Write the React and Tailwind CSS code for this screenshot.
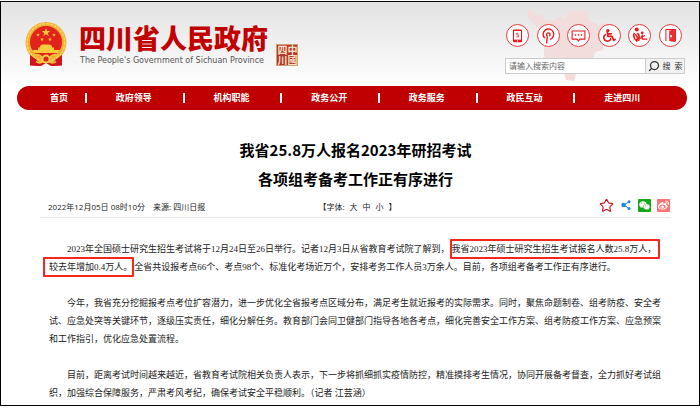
import React from 'react';
import { Search, Star } from 'lucide-react';
import { FaWeixin, FaWeibo, FaWheelchair } from 'react-icons/fa';

const navItems = ['政府领导', '机构职能', '政务公开', '政务服务', '政民互动', '走进四川'];

function Emblem() {
  const star = 'M0 -5 L1.2 -1.6 L4.8 -1.6 L1.9 0.6 L3 4 L0 1.9 L-3 4 L-1.9 0.6 L-4.8 -1.6 L-1.2 -1.6Z';
  return (
    <svg viewBox="0 0 42 44" className="h-11 w-[42px] shrink-0" aria-hidden="true">
      <path d="M5 30 L5 43 L16 44 L21 41 L26 44 L37 43 L37 30Z" fill="#d3141b" />
      <circle cx="21" cy="20.5" r="20.5" fill="#eeb032" />
      <circle cx="21" cy="20.5" r="18.8" fill="none" stroke="#fad45c" strokeWidth="1.6" strokeDasharray="3 1" />
      <circle cx="21" cy="20" r="16" fill="#e2231c" />
      <g fill="#fbc93d">
        <path d={star} transform="translate(21 10.5) scale(.9)" />
        <path d={star} transform="translate(13 13) scale(.4)" />
        <path d={star} transform="translate(29 13) scale(.4)" />
        <path d={star} transform="translate(17 17.5) scale(.4)" />
        <path d={star} transform="translate(25 17.5) scale(.4)" />
        <path d="M15 24 L17 22.500 H25 L27 24 V25.500 H29 V28 H35 L33 31 H9 L7 28 H13 V25.500 H15Z" />
      </g>
      <path d="M5 33 V43.500 L15 44 L12 38Z M37 33 V43.500 L27 44 L30 38Z" fill="#cf151b" />
      <path d="M7 33.500 Q14 31 17.500 36 M35 33.500 Q28 31 24.500 36 M11 39.500 Q15 42 18 39 M31 39.500 Q27 42 24 39" fill="none" stroke="#f4bd3b" strokeWidth="2" />
      <circle cx="21" cy="37" r="3.500" fill="#e2231c" stroke="#f8cf52" strokeWidth="1.8" />
    </svg>
  );
}

function ProvinceMap() {
  return (
    <svg viewBox="0 0 90 74" className="absolute right-[82px] top-[6px] h-[74px] w-[90px]" aria-hidden="true">
      <path
        d="M1 1 L5 2 L9 7 L14 6 L18 12 L28 12 L34 8 L38 12 L41 5 L45 2 L51 4 L56 2 L62 5 L63 13 L72 17 L80 15 L86 22 L84 28 L76 33 L76 42 L68 44 L66 52 L58 54 L53 50 L50 57 L49 66 L47 73 L39 72 L37 64 L33 66 L30 60 L21 54 L17 48 L17 37 L14 30 L11 20 L5 14 L1 9Z"
        fill="#f3dcdc"
      />
    </svg>
  );
}

function Phone() {
  return (
    <svg viewBox="0 0 23 23" className="size-full">
      <rect x="6.500" y="5" width="10" height="14" rx="1.200" fill="#e8181c" />
      <rect x="7.700" y="6.500" width="7.600" height="9.500" fill="#fff" />
      <path d="M12.700 9 H10.700 V11 H12.500 V13 H10.200" fill="none" stroke="#e8181c" strokeWidth=".8" />
      <circle cx="11.500" cy="17.400" r=".7" fill="#fff" />
    </svg>
  );
}

function Podcast() {
  return (
    <svg viewBox="0 0 23 23" className="size-full" fill="none" stroke="#e8181c" strokeWidth="1.500">
      <path d="M7.500 14.500 A5.800 5.800 0 1 1 13 15.800 M10.500 12.500 Q9.500 16 9.500 20" />
      <path d="M10.500 12.500 A2 2 0 1 1 12.500 12.200" />
    </svg>
  );
}

function Chat() {
  return (
    <svg viewBox="0 0 23 23" className="size-full">
      <path d="M4.500 6.500 H18.500 V15.500 H13 L11.500 17.500 L10 15.500 H4.500Z" fill="none" stroke="#e8181c" strokeWidth="1.200" />
      <path d="M7.500 11 H9 M10.800 11 H12.300 M14 11 H15.500" stroke="#e8181c" strokeWidth="1.500" />
    </svg>
  );
}

function Care() {
  return (
    <svg viewBox="0 0 23 23" className="size-full" fill="none" stroke="#e8181c" strokeWidth="1.700">
      <circle cx="8.500" cy="5" r="2.200" fill="#e8181c" stroke="none" />
      <circle cx="14.500" cy="8.500" r="1.500" fill="#e8181c" stroke="none" />
      <path d="M6 8.500 Q3.500 13 8.500 17.500 L9.500 14 L7 10 M9 9 Q12.500 11 10.500 17.500" />
      <path d="M14.500 10.500 V15.500 H20 M14.500 11.500 L12.500 15 M15 12.500 L17.500 11.500" strokeWidth="1.300" />
    </svg>
  );
}

function Door() {
  return (
    <svg viewBox="0 0 23 23" className="size-full">
      <path d="M6.500 17.500 V5 H17 V17.500" fill="none" stroke="#e8181c" strokeWidth="1.100" />
      <path d="M10 6 L17 5 V19 L10 17.500Z" fill="#ea3034" />
      <rect x="11.300" y="11" width="1.700" height="2.500" fill="#fff" />
    </svg>
  );
}

const tools = [
  ['手机版', <Phone />],
  ['微门户', <Podcast />],
  ['互动交流', <Chat />],
  ['无障碍', <FaWheelchair className="size-[13px]" />],
  ['关怀版', <Care />],
  ['登录', <Door />],
];

export default function App() {
  return (
    <div className="bg-white pt-px font-['Open_Sans','Noto_Sans_CJK_SC',sans-serif] text-black">
      <div className="overflow-hidden border border-black">
        <header className="relative flex h-[84px] justify-between bg-linear-to-b from-[#e2e2e2] to-white pl-6 pr-[14px]">
          <ProvinceMap />
          <div className="flex items-start pt-5">
            <Emblem />
            <div className="ml-3 text-[#c30000]">
              <div className="pt-[2px] text-[27px] font-black leading-[27px] font-['Noto_Sans_CJK_SC',sans-serif]">四川省人民政府</div>
              <div className="pl-px pt-1 text-[8px] leading-3 text-[#555] font-['DejaVu_Sans',sans-serif]">The People's Government of Sichuan Province</div>
            </div>
            <div className="ml-2 mt-[22px] size-[22px] border border-[#c9a070] bg-[#b5332a] text-[10px] font-bold leading-[10px] text-[#f3e3c4] [writing-mode:vertical-rl] font-['Noto_Sans_CJK_SC',sans-serif]">
              中國四川
            </div>
          </div>
          <div className="relative w-[180px] pt-[22px]">
            <div className="flex justify-between pl-px pr-[3px]">
              {tools.map(([label, icon]) => (
                <button
                  key={label}
                  aria-label={label}
                  className="flex size-[23px] items-center justify-center rounded-full border border-[#e8383c] bg-white text-[#e8181c]"
                >
                  {icon}
                </button>
              ))}
            </div>
            <form className="mt-[11px] flex h-4 border border-[#ccc] bg-white" onSubmit={(e) => e.preventDefault()}>
              <input
                aria-label="搜索内容"
                placeholder="请输入搜索内容"
                className="min-w-0 flex-1 px-[3px] text-[8px] leading-[14px] outline-none placeholder:text-[#666]"
              />
              <button className="flex w-[39px] items-center justify-center gap-[3px] whitespace-nowrap border-l border-[#ccc] bg-[#f2f2f2] text-[8px] leading-[14px] text-[#333]">
                <Search className="size-3 -scale-x-100" strokeWidth={2.5} />
                <span className="flex gap-1">
                  <span>搜</span>
                  <span>索</span>
                </span>
              </button>
            </form>
          </div>
        </header>

        <nav className="ml-4 mr-3 flex h-6 items-center rounded-full bg-[#c00000] px-4 text-center text-[9px] font-bold leading-3 text-white">
          <a href="#home" className="w-[52px]">首页</a>
          {navItems.map((item) => (
            <a key={item} href="#nav" className="flex-1 border-l-2 border-white pr-[2px] leading-[10px]">
              {item}
            </a>
          ))}
        </nav>

        <main>
          <h1 className="ml-[39px] mr-7 mt-[25px] text-center text-[15px] font-bold leading-[29px] font-['Noto_Sans_CJK_SC',sans-serif]">
            我省25.8万人报名2023年研招考试
            <br />
            各项组考备考工作正有序进行
          </h1>

          <div className="ml-[39px] mr-7 grid h-[25px] grid-cols-3 items-center whitespace-nowrap border-b border-[#e8e8e8] text-[8px] leading-3 text-[#222]">
            <div className="flex gap-2 pl-2 pt-1">
              <span>2022年12月05日 08时10分</span>
              <span>来源: 四川日报</span>
            </div>
            <div className="flex justify-center gap-[5px] pl-1 pt-1">
              <span>【字体:</span>
              <button>大</button>
              <button>中</button>
              <button>小</button>
              <span>】</span>
            </div>
            <div className="flex items-center justify-end gap-[6px] pr-px">
              <button aria-label="收藏">
                <Star className="size-[15px] text-[#c8161d]" strokeWidth={1.8} />
              </button>
              <button aria-label="分享">
                <svg viewBox="0 0 12 12" className="size-3" fill="#1b87e0">
                  <path d="M3.500 6 L9 3 M3.500 6 L9 9.300" stroke="#1b87e0" strokeWidth=".9" />
                  <circle cx="3.600" cy="6" r="2.300" />
                  <circle cx="9" cy="2.700" r="1.500" />
                  <circle cx="9" cy="9.500" r="1.500" />
                </svg>
              </button>
              <button aria-label="微信" className="flex size-[13px] items-center justify-center rounded-[1px] bg-[#14a81a] text-white">
                <FaWeixin className="size-[11px]" />
              </button>
              <button aria-label="微博" className="flex size-[13px] items-center justify-center rounded-[1px] bg-[#fb7474] text-white">
                <FaWeibo className="size-[11px]" />
              </button>
            </div>
          </div>

          <article className="space-y-[18px] whitespace-nowrap pb-[3px] pl-12 pt-[22px] text-[9px] leading-[18px] text-[#222] font-['Liberation_Serif','Noto_Sans_CJK_SC',sans-serif]">
            <p className="indent-[18px]">
              2023年全国硕士研究生招生考试将于12月24日至26日举行。记者12月3日从省教育考试院了解到，
              <mark className="rounded-[1px] border-2 border-[#f5261d] bg-transparent py-[3px] pr-[2px] text-inherit">
                我省2023年硕士研究生招生考试报名人数25.8万人，
              </mark>
              <br />
              <mark className="-ml-[6px] rounded-[1px] border-2 border-[#f5261d] bg-transparent py-[3px] pl-1 text-inherit">
                较去年增加0.4万人。
              </mark>
              全省共设报考点66个、考点98个、标准化考场近万个，安排考务工作人员3万余人。目前，各项组考备考工作正有序进行。
            </p>
            <p className="indent-[18px]">
              今年，我省充分挖掘报考点考位扩容潜力，进一步优化全省报考点区域分布，满足考生就近报考的实际需求。同时，聚焦命题制卷、组考防疫、安全考
              <br />
              试、应急处突等关键环节，逐级压实责任，细化分解任务。教育部门会同卫健部门指导各地各考点，细化完善安全工作方案、组考防疫工作方案、应急预案
              <br />
              和工作指引，优化应急处置流程。
            </p>
            <p className="indent-[18px]">
              目前，距离考试时间越来越近，省教育考试院相关负责人表示，下一步将抓细抓实疫情防控，精准摸排考生情况，协同开展备考督查，全力抓好考试组
              <br />
              织，加强综合保障服务，严肃考风考纪，确保考试安全平稳顺利。（记者 江芸涵）
            </p>
          </article>
        </main>
      </div>
    </div>
  );
}
